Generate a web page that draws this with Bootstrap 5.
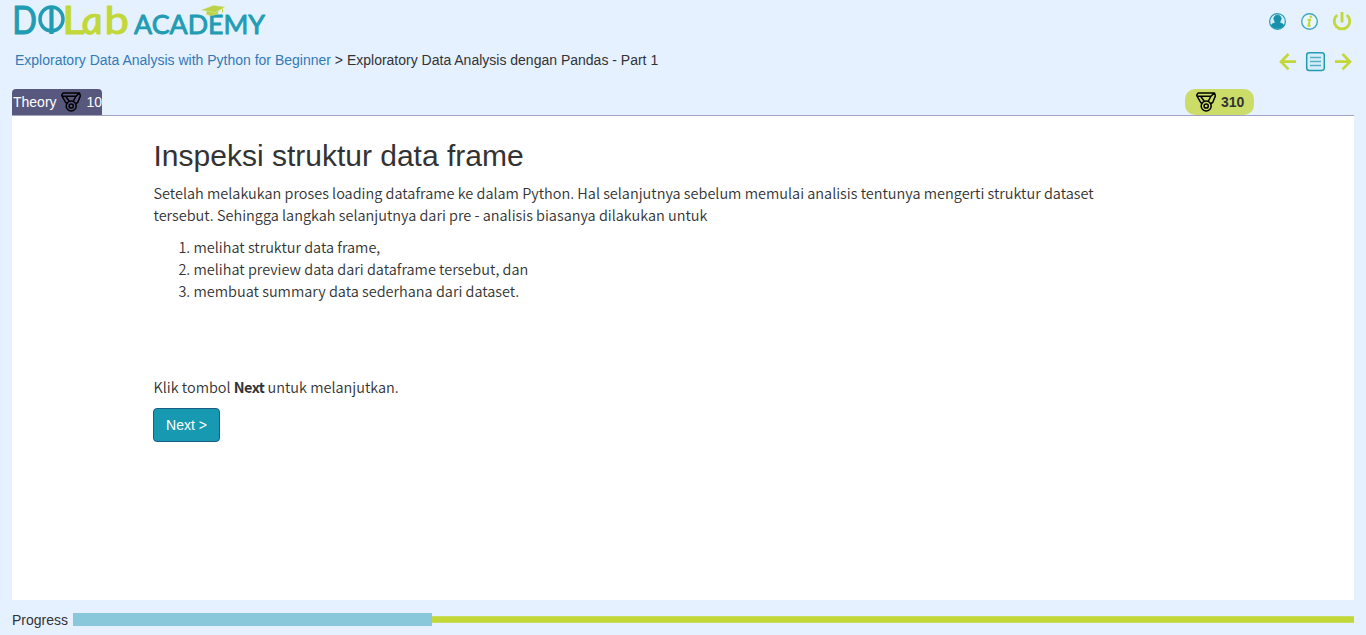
<!DOCTYPE html>
<html lang="id">
<head>
<meta charset="utf-8">
<meta name="viewport" content="width=device-width, initial-scale=1">
<title>DQLab Academy</title>
<link href="https://cdn.jsdelivr.net/npm/bootstrap@5.3.0/dist/css/bootstrap.min.css" rel="stylesheet">
<style>
body{background:#e5f1ff;color:#333;font:14px/20px "Liberation Sans",Arial,sans-serif;height:635px;overflow:hidden}
a{color:#337ab7}
svg{display:block;flex:none}
.topbar{height:43px;padding:0 13px 0 10px}
.logo{overflow:visible}
.crumbs{height:46px;padding:7px 13px 0 15px}
.tabs-row{height:27px;margin:0 12px;border-bottom:1px solid #a3a3c8}
.theory-tab{width:90px;height:26px;background:#58587f;color:#fff;border-radius:4px 4px 0 0;padding-left:1px}
.score-pill{width:69px;height:26px;background:#cbdd68;border-radius:10px;margin-right:100px;padding-left:11px}
.lesson{margin:0 12px;height:484px;padding:23px 100px 0 141px}
.lesson h1{font-size:30px;line-height:33px;margin:0 0 10px;font-weight:400;padding-left:.5px}
.copy{font:350 14.49px/22px "Noto Sans CJK SC",sans-serif;padding-left:.5px}
.copy p{margin:0 0 10px}
.copy ol{padding-left:40px;margin:0 0 74px}
.copy b{letter-spacing:-.6px}
.btn-go{--bs-btn-color:#fff;--bs-btn-bg:#1899b2;--bs-btn-border-color:#1b5c84;--bs-btn-hover-color:#fff;--bs-btn-hover-bg:#14859b;--bs-btn-font-size:14px;--bs-btn-line-height:20px;--bs-btn-padding-x:12px;--bs-btn-border-radius:4px;width:67px;height:34px}
.track{height:13px;background:linear-gradient(#c8dc60,#c8dc60) 0 3px/100% 7px no-repeat}
.track-line{background:linear-gradient(#c2d839,#c2d839) 0 4px/100% 5px no-repeat}
.track-done{background:#88c8da;height:13px}
</style>
</head>
<body>
<header class="topbar d-flex justify-content-between">
  <svg class="logo" width="260" height="43" viewBox="10 0 260 43" font-family="Lato,sans-serif" fill="#229cb3" stroke="#229cb3" stroke-linejoin="round">
    <text transform="translate(12.300 33.700) scale(.84 1)" font-size="38.500" stroke-width="1.200">D</text>
    <g fill="none"><ellipse cx="51.500" cy="19" rx="11.500" ry="12" stroke-width="3.500"/><path d="M51.500 6v28" stroke-width="4.200"/></g>
    <g font-size="38.500" stroke-width="1.100" fill="#c2d839" stroke="#c2d839">
      <text transform="translate(62.200 33.700) scale(1.130 1)">L</text>
      <text transform="translate(83 33.700) skewX(8) scale(1.080 1)" font-style="italic">a</text>
      <text transform="translate(104.400 33.700) scale(1.130 1)">b</text>
    </g>
    <text transform="translate(134 34)" font-size="27.500" stroke-width=".9" textLength="131" lengthAdjust="spacingAndGlyphs">ACADEMY</text>
    <path d="m201.500 10 12-4.500 11 1.500-9 5.500zM206.500 11v3.500q5 2.500 11.500-.8V11l-3 1.500z" fill="#b9d247" stroke="#d5e27c" stroke-width=".5"/>
    <path d="M222.500 8.500v4" stroke="#c2d839"/>
  </svg>
  <nav class="d-flex" aria-label="Akun">
    <svg width="20" height="20" viewBox="0 0 20 20" style="margin:11px 12px 0 0"><circle cx="10.500" cy="10.500" r="7.900" fill="#d5edf7" stroke="#229cb3" stroke-width="1.200"/><path d="M10.500 4a3.600 3.600 0 0 1 3 5.700l-.8 2q3.700.7 4 2.800a7.800 7.800 0 0 1-12.400 0q.3-2.100 4-2.800l-.8-2a3.600 3.600 0 0 1 3-5.700z" fill="#1690ab" stroke="#1690ab" stroke-width=".7"/></svg>
    <svg width="20" height="20" viewBox="0 0 20 20" style="margin:11px 12px 0 0"><circle cx="10.500" cy="10.500" r="7.800" fill="#eaf7fb" stroke="#44a8bf" stroke-width="1.400"/><circle cx="11.800" cy="5.700" r="1.300" fill="#c2d839"/><path d="M8.500 8.800h2.400l-1.500 6h2.200" fill="none" stroke="#c2d839" stroke-width="2"/></svg>
    <svg width="22" height="22" viewBox="0 0 22 22" style="margin:10px 0 0"><path d="M6.200 5a7.800 7.800 0 1 0 9.600 0M11 2v10.500" fill="none" stroke="#c2d839" stroke-width="2.800"/></svg>
  </nav>
</header>
<div class="crumbs d-flex justify-content-between">
  <div><a href="#" class="text-decoration-none">Exploratory Data Analysis with Python for Beginner</a> &gt; Exploratory Data Analysis dengan Pandas - Part 1</div>
  <nav class="d-flex" aria-label="Materi">
    <svg width="18" height="20" viewBox="0 0 18 20" style="margin:2px 8px 0 0"><path d="M17 9.700H3M9.500 2 2 9.700l7.500 7.700" fill="none" stroke="#c2d839" stroke-width="2.700"/></svg>
    <svg width="20" height="20" viewBox="0 0 20 20" style="margin:2px 9px 0 0"><rect x="1.700" y=".8" width="17.600" height="17.600" rx="2.500" fill="#d7eef9" stroke="#229cb3" stroke-width="1.500"/><path d="M5 5.500h11M5 9.500h11M5 13.500h11" stroke="#55b0c5" stroke-width="1.400"/></svg>
    <svg width="18" height="20" viewBox="0 0 18 20" style="margin:2px 1px 0 0"><path d="M1 9.700h14M8.500 2l7.500 7.700-7.500 7.700" fill="none" stroke="#c2d839" stroke-width="2.700"/></svg>
  </nav>
</div>
<svg width="0" height="0" class="position-absolute" aria-hidden="true"><symbol id="medal" viewBox="0 0 20 20"><g fill="none" stroke="#000" stroke-width="1.500" stroke-linejoin="round"><path d="M2 .9h16.500l.9 3-2.700 6.600-2 1.200M2 .9.6 3.400l4.200 7.200 1.400.8M1.200 4.300h13.800l3.500-3.400M4.800 4.500l3.500 4.800M14.800 4.500l-2.600 4.800"/><circle cx="10.200" cy="14" r="5"/><circle cx="10.200" cy="14" r="2.100"/></g></symbol></svg>
<div class="tabs-row d-flex justify-content-between">
  <div class="theory-tab d-flex align-items-center">Theory<svg width="20" height="20" style="margin:0 6px 0 4px"><use href="#medal"/></svg>10</div>
  <div class="score-pill d-flex align-items-center fw-bold"><svg width="20" height="20" style="margin-right:5px"><use href="#medal"/></svg>310</div>
</div>
<main class="lesson bg-white">
  <h1>Inspeksi struktur data frame</h1>
  <div class="copy">
    <p>Setelah melakukan proses loading dataframe ke dalam Python. Hal selanjutnya sebelum memulai analisis tentunya mengerti struktur dataset<br>tersebut. Sehingga langkah selanjutnya dari pre - analisis biasanya dilakukan untuk</p>
    <ol><li>melihat struktur data frame,</li><li>melihat preview data dari dataframe tersebut, dan</li><li>membuat summary data sederhana dari dataset.</li></ol>
    <p>Klik tombol <b>Next</b> untuk melanjutkan.</p>
  </div>
  <button class="btn btn-go" type="button">Next &gt;</button>
</main>
<footer class="d-flex align-items-start" style="padding:10px 12px 0">
  <span style="width:61px">Progress</span>
  <div class="track flex-grow-1" style="margin-top:3px"><div class="track-line"><div class="track-done" style="width:28.03%"></div></div></div>
</footer>
<script src="https://cdn.jsdelivr.net/npm/bootstrap@5.3.0/dist/js/bootstrap.bundle.min.js"></script>
</body>
</html>
